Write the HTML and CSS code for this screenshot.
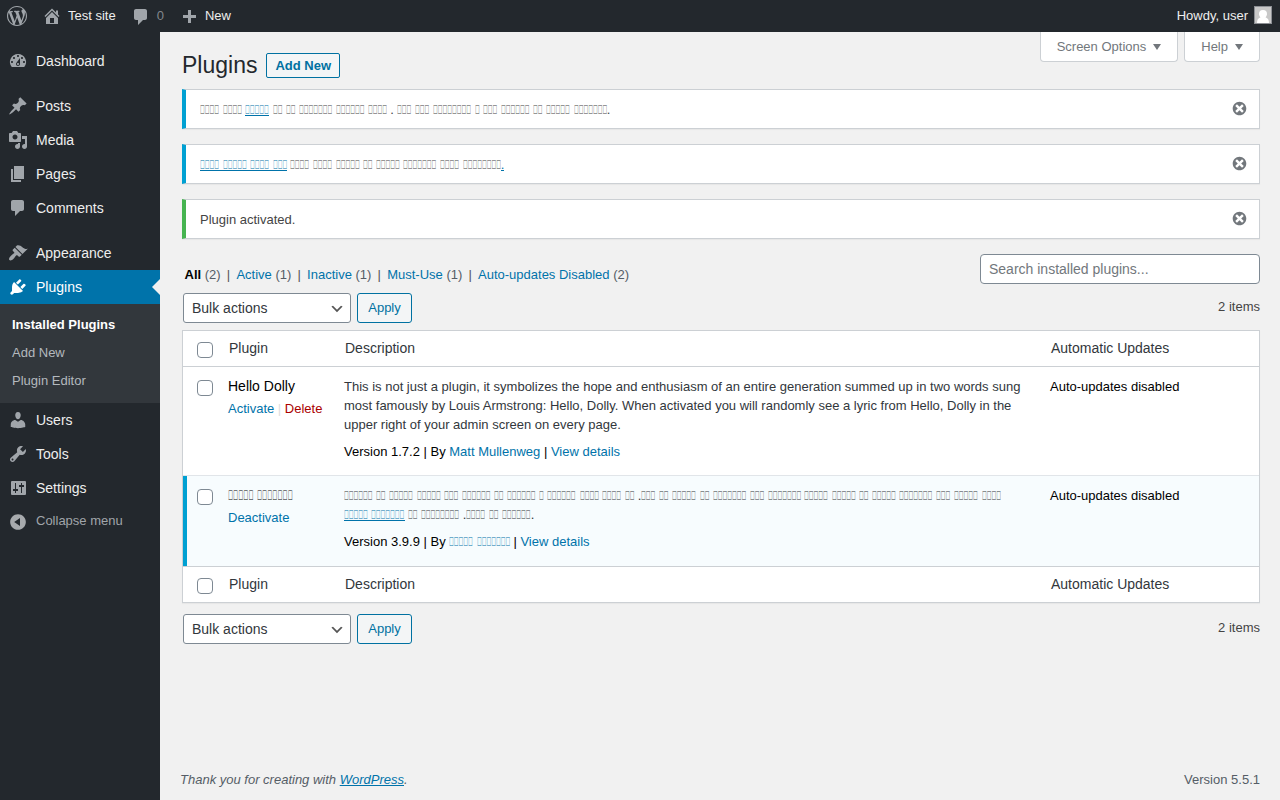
FILE: index.html
```
<!DOCTYPE html>
<html lang="en">
<head>
<meta charset="utf-8">
<title>Plugins</title>
<link rel="stylesheet" href="styles.css">
</head>
<body>
<header class="adminbar">
  <svg class="icon wp-logo" viewBox="0 0 20 20"><path d="M20 10c0-5.51-4.49-10-10-10C4.48 0 0 4.49 0 10c0 5.52 4.48 10 10 10 5.51 0 10-4.48 10-10zM7.78 15.37L4.37 6.22c.55-.02 1.17-.08 1.17-.08.5-.06.44-1.13-.06-1.11 0 0-1.45.11-2.37.11-.18 0-.37 0-.58-.01C4.12 2.69 6.87 1.11 10 1.11c2.33 0 4.45.87 6.05 2.34-.68-.11-1.65.39-1.65 1.58 0 .74.45 1.36.9 2.1.35.61.55 1.36.55 2.46 0 1.49-1.4 5-1.4 5l-3.03-8.37c.54-.02.82-.17.82-.17.5-.05.44-1.25-.06-1.22 0 0-1.44.12-2.38.12-.87 0-2.33-.12-2.33-.12-.5-.03-.56 1.2-.06 1.22l.92.08 1.26 3.41zM17.41 10c.24-.64.74-1.87.43-4.25.7 1.29 1.05 2.71 1.05 4.25 0 3.29-1.73 6.24-4.4 7.78.97-2.59 1.94-5.2 2.92-7.78zM6.1 18.09C3.12 16.65 1.11 13.53 1.11 10c0-1.3.23-2.48.72-3.59C3.25 10.3 4.67 14.2 6.1 18.09zm4.03-6.63l2.58 6.98c-.86.29-1.76.45-2.71.45-.79 0-1.57-.11-2.29-.33.81-2.38 1.62-4.74 2.42-7.1z"/></svg>
  <svg class="icon bar-home" viewBox="0 0 20 20"><path d="M16 8.5l1.53 1.53-1.06 1.06L10 4.6l-6.47 6.49-1.06-1.06L10 2.5l4 4v-2h2v4zm-6-2.46l6 5.99V18H4v-5.97zM12 17v-5H8v5h4z"/></svg>
  <span class="site">Test site</span>
  <svg class="icon bar-comment" viewBox="0 0 20 20"><path d="M5 2h9c1.1 0 2 .9 2 2v7c0 1.1-.9 2-2 2h-2l-5 5v-5H5c-1.1 0-2-.9-2-2V4c0-1.1.9-2 2-2z"/></svg>
  <span class="count">0</span>
  <svg class="icon bar-plus" viewBox="0 0 20 20"><path d="M17 9v3h-5v5H9v-5H4V9h5V4h3v5h5z"/></svg>
  <span class="new">New</span>
  <span class="howdy">Howdy, user</span>
  <svg class="avatar" viewBox="0 0 18 18"><path fill="#8c8f94" d="M0 0h18v18H0z"/><path fill="#c8c8c8" d="M1 1h16v16H1z"/><path fill="#fff" d="M9 4a4 4 0 0 1 4 4c0 1.400-.7 2.500-1.500 3.300C14 12.300 15 14 15 17H3c0-3 1-4.700 3.500-5.700C5.700 10.500 5 9.400 5 8a4 4 0 0 1 4-4z"/></svg>
</header>
<div class="shell">
  <nav class="menu">
    <a class="item"><svg class="icon" viewBox="0 0 20 20"><path fill-rule="evenodd" d="M3.76 16h12.480A7.998 7.998 0 0 0 10 3a7.998 7.998 0 0 0-6.240 13zM10 4c.55 0 1 .45 1 1s-.45 1-1 1-1-.45-1-1 .45-1 1-1zM6 6c.55 0 1 .45 1 1s-.45 1-1 1-1-.45-1-1 .45-1 1-1zm8 0c.55 0 1 .45 1 1s-.45 1-1 1-1-.45-1-1 .45-1 1-1zm-5.370 5.550L12 7v6c0 1.100-.9 2-2 2s-2-.9-2-2c0-.57.24-1.080.63-1.450zM4 10c.55 0 1 .45 1 1s-.45 1-1 1-1-.45-1-1 .45-1 1-1zm12 0c.55 0 1 .45 1 1s-.45 1-1 1-1-.45-1-1 .45-1 1-1zm-5 3c0-.55-.45-1-1-1s-1 .45-1 1 .45 1 1 1 1-.45 1-1z"/></svg>Dashboard</a>
    <a class="item gap"><svg class="icon" viewBox="0 0 20 20"><path d="M10.440 3.020l1.820-1.820 6.360 6.350-1.830 1.820c-1.050-.68-2.480-.57-3.410.36l-.75.75c-.92.93-1.040 2.350-.35 3.410l-1.830 1.820-2.410-2.410-2.800 2.790c-.42.42-3.380 2.710-3.800 2.290s1.860-3.390 2.280-3.810l2.790-2.790L4.100 9.360l1.830-1.820c1.050.69 2.480.57 3.400-.36l.75-.75c.93-.92 1.050-2.350.36-3.410z"/></svg>Posts</a>
    <a class="item"><svg class="icon" viewBox="0 0 20 20"><path fill-rule="evenodd" d="M13 11V4c0-.55-.45-1-1-1h-1.670L9 1H5L3.670 3H2c-.55 0-1 .45-1 1v7c0 .55.45 1 1 1h10c.55 0 1-.45 1-1zM7 4.500c1.380 0 2.500 1.120 2.500 2.500S8.380 9.500 7 9.500 4.500 8.380 4.500 7 5.620 4.500 7 4.500zM14 6h5v10.500c0 1.380-1.120 2.500-2.500 2.500S14 17.880 14 16.500s1.120-2.500 2.500-2.500c.17 0 .34.02.5.05V9h-3V6zm-4 8.050V13h2v3.500c0 1.380-1.120 2.500-2.500 2.500S7 17.880 7 16.500 8.120 14 9.500 14c.17 0 .34.02.5.05z"/></svg>Media</a>
    <a class="item"><svg class="icon" viewBox="0 0 20 20"><path d="M6 15V2h10v13H6zm-1 1h8v2H3V5h2v11z"/></svg>Pages</a>
    <a class="item"><svg class="icon" viewBox="0 0 20 20"><path d="M5 2h9c1.100 0 2 .9 2 2v7c0 1.100-.9 2-2 2h-2l-5 5v-5H5c-1.100 0-2-.9-2-2V4c0-1.100.9-2 2-2z"/></svg>Comments</a>
    <a class="item gap"><svg class="icon" viewBox="0 0 20 20"><path d="M14.480 11.060L7.410 3.990l1.500-1.500c.5-.56 2.300-.47 3.510.32 1.210.8 1.430 1.280 2.910 2.100 1.180.64 2.450 1.260 4.450.85zm-.71.71L6.700 4.700 4.930 6.470c-.39.39-.39 1.020 0 1.410l1.060 1.060c.39.39.39 1.030 0 1.420-.6.6-1.430 1.110-2.210 1.690-.35.26-.7.53-1.010.84C1.430 14.230.4 16.080 1.400 17.070c.99 1 2.840-.03 4.180-1.360.31-.31.58-.66.85-1.020.57-.78 1.080-1.610 1.690-2.210.39-.39 1.020-.39 1.410 0l1.060 1.060c.39.39 1.020.39 1.410 0z"/></svg>Appearance</a>
    <a class="item current"><svg class="icon" viewBox="0 0 20 20"><path d="M13.110 4.360L9.870 7.600 8 5.730l3.240-3.240c.35-.34 1.050-.2 1.560.32.52.51.66 1.210.31 1.550zm-8 1.770l.91-1.120 9.010 9.010-1.190.84c-.71.71-2.630 1.160-3.820 1.160H6.140L4.900 17.260c-.59.59-1.540.59-2.120 0-.59-.58-.59-1.530 0-2.120l1.240-1.240v-3.880c0-1.130.4-3.190 1.090-3.890zm7.260 3.970l3.240-3.240c.34-.35 1.040-.21 1.550.31.52.51.66 1.210.31 1.550l-3.240 3.250z"/></svg>Plugins</a>
    <div class="submenu"><a class="active">Installed Plugins</a><a>Add New</a><a>Plugin Editor</a></div>
    <a class="item"><svg class="icon" viewBox="0 0 20 20"><path d="M10 9.250c-2.270 0-2.730-3.440-2.730-3.440C7 4.020 7.820 2 9.970 2c2.160 0 2.980 2.020 2.710 3.810 0 0-.41 3.440-2.680 3.440zm0 2.570L12.720 10c2.390 0 4.520 2.330 4.520 4.530v2.490s-3.650 1.130-7.240 1.130c-3.650 0-7.240-1.130-7.240-1.130v-2.490c0-2.250 1.940-4.480 4.470-4.480z"/></svg>Users</a>
    <a class="item"><svg class="icon" viewBox="0 0 20 20"><path fill-rule="evenodd" d="M16.680 9.770c-1.340 1.340-3.300 1.670-4.950.99l-5.410 6.520c-.99.99-2.590.99-3.580 0s-.99-2.590 0-3.570l6.520-5.420c-.68-1.650-.35-3.610.99-4.950 1.280-1.280 3.120-1.620 4.720-1.060l-2.890 2.890 2.820 2.820 2.860-2.870c.53 1.580.18 3.390-1.080 4.650zM3.810 16.210c.4.39 1.040.39 1.430 0 .4-.4.4-1.040 0-1.430-.39-.4-1.030-.4-1.430 0-.39.39-.39 1.030 0 1.430z"/></svg>Tools</a>
    <a class="item"><svg class="icon" viewBox="0 0 20 20"><path fill-rule="evenodd" d="M4 3h13a1 1 0 0 1 1 1v12a1 1 0 0 1-1 1H4a1 1 0 0 1-1-1V4a1 1 0 0 1 1-1zM7 5v6H5v2h2v2h1v-2h2v-2H8V5zM13 5v2h-2v2h2v6h1V9h2V7h-2V5z"/></svg>Settings</a>
    <a class="item collapse"><svg class="icon" viewBox="0 0 20 20"><path fill-rule="evenodd" d="M10 2.160c4.330 0 7.840 3.510 7.840 7.840S14.330 17.840 10 17.840 2.160 14.330 2.160 10 5.710 2.160 10 2.160zm2 11.720V6.120L6.180 9.970z"/></svg><span>Collapse menu</span></a>
  </nav>
  <main class="content">
    <div class="screen-links"><a class="options">Screen Options</a><a>Help</a></div>
    <div class="heading"><h1>Plugins</h1><a class="add-new">Add New</a></div>
    <div class="notice"><p class="runs">4 4 <a class="u">5</a> 2 2 7 6 4 . 3 3 8 1 3 6 2 5 7.</p><svg class="dismiss" viewBox="0 0 20 20"><path d="M10 2c4.420 0 8 3.580 8 8s-3.580 8-8 8-8-3.580-8-8 3.580-8 8-8zm5 11l-3-3 3-3-2-2-3 3-3-3-2 2 3 3-3 3 2 2 3-3 3 3z"/></svg></div>
    <div class="notice"><p class="runs"><a class="u">4 5 4 3</a> 4 4 5 2 5 7 4 8<a class="u">.</a></p><svg class="dismiss" viewBox="0 0 20 20"><path d="M10 2c4.420 0 8 3.580 8 8s-3.580 8-8 8-8-3.580-8-8 3.580-8 8-8zm5 11l-3-3 3-3-2-2-3 3-3-3-2 2 3 3-3 3 2 2 3-3 3 3z"/></svg></div>
    <div class="notice success"><p>Plugin activated.</p><svg class="dismiss" viewBox="0 0 20 20"><path d="M10 2c4.420 0 8 3.580 8 8s-3.580 8-8 8-8-3.580-8-8 3.580-8 8-8zm5 11l-3-3 3-3-2-2-3 3-3-3-2 2 3 3-3 3 2 2 3-3 3 3z"/></svg></div>
    <div class="filters">
      <ul class="views"><li><b>All</b> (2)</li><li><a>Active</a> (1)</li><li><a>Inactive</a> (1)</li><li><a>Must-Use</a> (1)</li><li><a>Auto-updates Disabled</a> (2)</li></ul>
      <input class="search" type="text" placeholder="Search installed plugins...">
    </div>
    <div class="tablenav top">
      <div class="select">Bulk actions<svg viewBox="0 0 20 20"><path d="M5 6l5 5 5-5 2 1-7 7-7-7 2-1z"/></svg></div>
      <a class="button">Apply</a><span class="total">2 items</span>
    </div>
    <div class="plugins">
      <div class="row head"><i class="check"></i><span>Plugin</span><span>Description</span><span>Automatic Updates</span></div>
      <div class="row first">
        <i class="check"></i>
        <div class="name"><strong>Hello Dolly</strong><p><a>Activate</a><em> | </em><a class="delete">Delete</a></p></div>
        <div class="desc"><p>This is not just a plugin, it symbolizes the hope and enthusiasm of an entire generation summed up in two words sung most famously by Louis Armstrong: Hello, Dolly. When activated you will randomly see a lyric from Hello, Dolly in the upper right of your admin screen on every page.</p><p class="meta">Version 1.7.2 | By <a>Matt Mullenweg</a> | <a>View details</a></p></div>
        <div class="auto">Auto-updates disabled</div>
      </div>
      <div class="row enabled">
        <i class="check"></i>
        <div class="name"><strong class="runs">5 7</strong><p><a>Deactivate</a></p></div>
        <div class="desc"><p class="runs">6 2 5 5 3 6 2 6 1 6 4 4 2 .3 2 5 2 7 3 7 5 5 2 5 7 3 5 4<br><a class="u">5 7</a> 2 8 .4 2 6.</p><p class="meta">Version 3.9.9 | By <a class="runs">5 7</a> | <a>View details</a></p></div>
        <div class="auto">Auto-updates disabled</div>
      </div>
      <div class="row head foot"><i class="check"></i><span>Plugin</span><span>Description</span><span>Automatic Updates</span></div>
    </div>
    <div class="tablenav bottom">
      <div class="select">Bulk actions<svg viewBox="0 0 20 20"><path d="M5 6l5 5 5-5 2 1-7 7-7-7 2-1z"/></svg></div>
      <a class="button">Apply</a><span class="total">2 items</span>
    </div>
    <footer class="footer"><i>Thank you for creating with <a class="u">WordPress</a>.</i><span>Version 5.5.1</span></footer>
  </main>
</div>
<script src="runs.js"></script>
</body>
</html>
```
FILE: runs.js
```
// Expands word lengths into condensed words of an unassigned character, drawn as empty boxes.
const BOX = String.fromCodePoint(0x10FFF0);
const ADVANCE = 0.365; // em per box
document.querySelectorAll('.runs').forEach(el => {
  el.innerHTML = el.innerHTML.replace(/\d/g, n =>
    `<span class="word" style="width:${(n * ADVANCE).toFixed(3)}em">${BOX.repeat(+n)}</span>`);
});
```
FILE: styles.css
```
* { box-sizing: border-box; }
body { margin: 0; background: #f1f1f1; color: #444; font: 13px/19px "Liberation Sans", sans-serif; }
p, h1, ul { margin: 0; padding: 0; }
a { color: #0073aa; }
.u { text-decoration: underline; }
.runs .u { text-decoration: none; background: linear-gradient(#0073aa, #0073aa) 0 13px / 100% 1px no-repeat; }
.word { display: inline-block; white-space: nowrap; transform: scaleX(.4867); transform-origin: 0 0; }
.icon { width: 20px; height: 20px; fill: #a0a5aa; flex: none; }

.adminbar { display: flex; align-items: center; height: 32px; padding: 0 8px 0 7px; background: #23282d; color: #eee; }
.adminbar span { padding-bottom: 1px; }
.bar-home { margin-left: 15px; }
.bar-comment { margin: 2px 0 0 15px; }
.bar-plus { margin-left: 15px; }
.adminbar .site { margin-left: 6px; }
.adminbar .count { margin-left: 6px; color: #82878c; }
.adminbar .new { margin-left: 6px; }
.adminbar .howdy { margin-left: auto; }
.avatar { width: 18px; height: 18px; margin: -2px 0 0 6px; }

.shell { display: flex; height: 768px; }
.menu { width: 160px; padding-top: 12px; background: #23282d; flex: none; }
.item { display: flex; align-items: center; gap: 8px; height: 34px; padding-left: 8px; font-size: 14px; color: #eee; }
.gap { margin-top: 11px; }
.current { position: relative; background: #0073aa; color: #fff; }
.current .icon { fill: #fff; }
.current::after { content: ""; position: absolute; right: 0; top: 9px; border: 8px solid transparent; border-left: 0; border-right-color: #f1f1f1; }
.submenu { height: 99px; padding: 7px 12px; background: #32373c; }
.submenu a { display: block; line-height: 28px; color: #b4b9be; }
.submenu .active { color: #fff; font-weight: bold; }
.collapse { height: 33px; font-size: 13px; color: #a0a5aa; }
.collapse span { padding-bottom: 2px; }
.collapse .icon { fill: #a7aaad; }

.content { flex: 1; display: flex; flex-direction: column; padding: 0 20px 0 22px; }
.screen-links { display: flex; justify-content: flex-end; gap: 6px; height: 30px; margin-bottom: -30px; }
.screen-links a { display: flex; align-items: center; height: 30px; padding: 0 16px; border: 1px solid #ccd0d4; border-top: 0; border-radius: 0 0 4px 4px; background: #fff; color: #72777c; }
.screen-links a::after { content: ""; margin-left: 7px; border: 4px solid transparent; border-top: 6px solid #72777c; border-bottom: 0; }
.heading { display: flex; align-items: flex-start; height: 57px; padding-top: 18px; }
h1 { font-size: 23px; font-weight: 400; line-height: 30px; color: #23282d; }
.add-new { margin: 3px 0 0 9px; padding: 0 8px; height: 25px; line-height: 23px; border: 1px solid #0071a1; border-radius: 2px; background: #f3f5f6; color: #0071a1; font-weight: bold; }
.notice { display: flex; align-items: center; justify-content: space-between; height: 40px; margin-bottom: 15px; padding: 0 11px 0 14px; border: 1px solid #ccd0d4; border-left: 4px solid #00a0d2; background: #fff; box-shadow: 0 1px 1px rgba(0,0,0,.04); }
.notice p { padding-top: 1px; }
.success { border-left-color: #46b450; }
.dismiss { width: 17px; height: 17px; fill: #72777c; margin-top: -1px; }
.filters { display: flex; justify-content: space-between; height: 39px; }
.views { display: flex; padding: 11px 0 0 2.5px; list-style: none; color: #555d66; }
.views li + li::before { content: "|"; margin: 0 6.2px; color: #555; }
.views b { color: #000; }
.search { width: 280px; height: 30px; padding: 0 8px; border: 1px solid #7e8993; border-radius: 4px; background: #fff; font: 14px "Liberation Sans", sans-serif; }
.search::placeholder { color: #72777c; }
.tablenav { display: flex; height: 30px; padding-left: 1px; }
.select { display: flex; align-items: center; justify-content: space-between; width: 168px; padding: 0 5px 0 8px; border: 1px solid #7e8993; border-radius: 3px; background: #fff; font-size: 14px; color: #32373c; }
.select svg { width: 16px; height: 16px; margin-top: 1px; fill: #555; }
.button { margin-left: 6px; width: 55px; text-align: center; line-height: 28px; border: 1px solid #0071a1; border-radius: 3px; background: #f3f5f6; color: #0071a1; }
.total { margin-left: auto; padding-top: 4px; }
.plugins { margin: 7px 0 11px; border: 1px solid #ccd0d4; background: #fff; box-shadow: 0 1px 1px rgba(0,0,0,.04); }
.row { display: grid; grid-template-columns: 45px 116px 706px 1fr; }
.head { height: 36px; border-bottom: 1px solid #ccd0d4; font-size: 14px; color: #32373c; }
.head span { padding: 8px 0 0 1px; }
.head.foot { border-bottom: 0; border-top: 1px solid #ccd0d4; }
.check { width: 16px; height: 16px; margin: 13px 0 0 14px; border: 1px solid #7e8993; border-radius: 4px; background: #fff; }
.head .check { margin-top: 11px; }
.first { height: 108px; }
.enabled { height: 91px; border-top: 1px solid #e1e5e9; background: #f7fcfe; box-shadow: inset 4px 0 #00a0d2; }
.name strong { display: block; padding-top: 10px; font-size: 14px; font-weight: 400; color: #000; white-space: nowrap; }
.name p { padding-top: 3px; white-space: nowrap; }
.name em { font-style: normal; color: #ddd; }
.name .delete { color: #a00; }
.desc { padding: 10px 25px 0 0; color: #32373c; }
.desc .meta { margin-top: 8px; color: #000; }
.auto { padding-top: 10px; color: #000; }
.footer { display: flex; justify-content: space-between; margin: auto 0 11px -2px; color: #555d66; }
```
